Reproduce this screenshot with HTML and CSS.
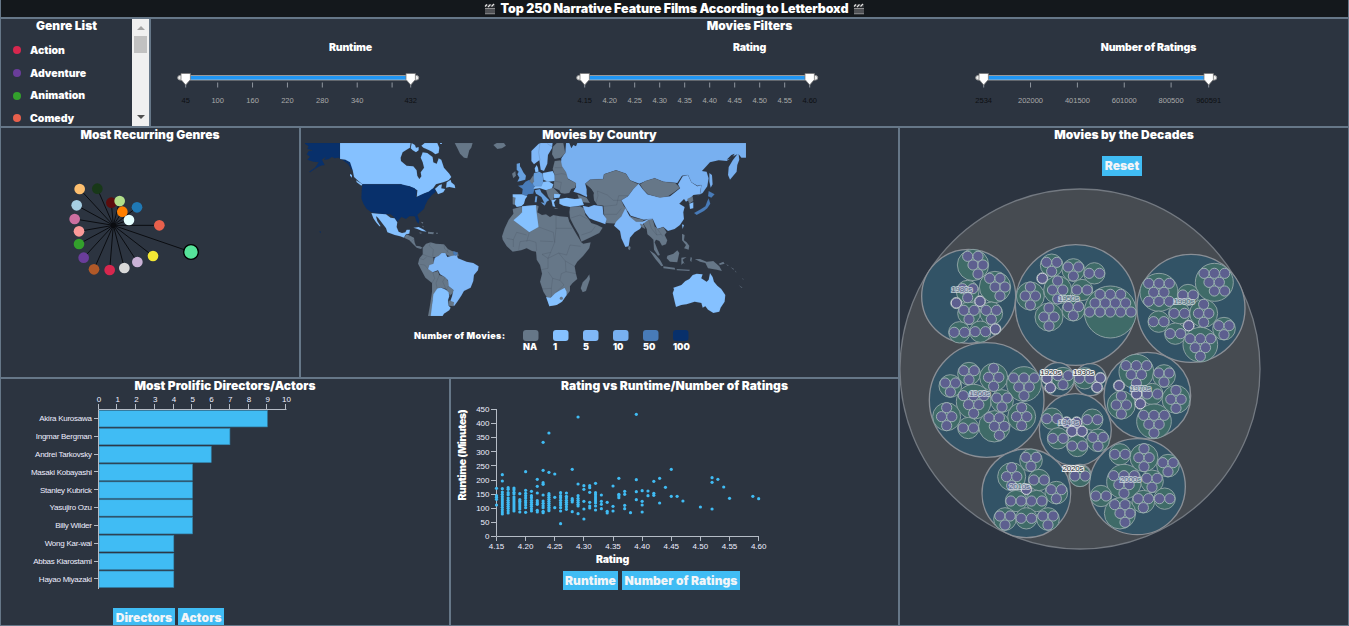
FILE: index.html
```html
<!DOCTYPE html>
<html lang="en">
<head>
<meta charset="utf-8">
<title>Top 250 Narrative Feature Films</title>
<link rel="stylesheet" href="styles.css">
</head>
<body>
<div class="dashboard">
  <header class="topbar">
    <svg class="clap" viewBox="0 0 12 12"><path d="M1 1H11V4.500H1Z" fill="#303236"/><path d="M1 3.500l2-2M4 4l2.500-2.500M7.500 3.500l2.500-2.500" stroke="#e4e4e4" stroke-width="1.200" fill="none"/><path d="M1 5H11V11H1Z" fill="#505256"/><path d="M1 5.500H11M1 10.800H11" stroke="#aaa" stroke-width=".7"/></svg>
    <h1 class="page-title">Top 250 Narrative Feature Films According to Letterboxd</h1>
    <svg class="clap" viewBox="0 0 12 12"><path d="M1 1H11V4.500H1Z" fill="#303236"/><path d="M1 3.500l2-2M4 4l2.500-2.500M7.500 3.500l2.500-2.500" stroke="#e4e4e4" stroke-width="1.200" fill="none"/><path d="M1 5H11V11H1Z" fill="#505256"/><path d="M1 5.500H11M1 10.800H11" stroke="#aaa" stroke-width=".7"/></svg>
  </header>

  <section class="panel genres">
    <div class="genre-scroll">
      <h2 class="title">Genre List</h2>
      <ul class="genre-list">
        <li><i class="dot action"></i>Action</li>
        <li><i class="dot adventure"></i>Adventure</li>
        <li><i class="dot animation"></i>Animation</li>
        <li><i class="dot comedy"></i>Comedy</li>
      </ul>
    </div>
    <div class="scrollbar"><i class="arrow up"></i><i class="thumb"></i><i class="arrow down"></i></div>
  </section>

  <section class="panel filters">
    <h2 class="title">Movies Filters</h2>
    <div class="filter-row">
      <div class="filter"><h3 class="subtitle">Runtime</h3><svg class="slider" id="s-runtime"></svg></div>
      <div class="filter"><h3 class="subtitle">Rating</h3><svg class="slider" id="s-rating"></svg></div>
      <div class="filter"><h3 class="subtitle">Number of Ratings</h3><svg class="slider" id="s-count"></svg></div>
    </div>
  </section>

  <section class="panel network">
    <h2 class="title">Most Recurring Genres</h2>
    <svg class="chart" id="network" width="298" height="233" viewBox="1 143 298 233"></svg>
  </section>

  <section class="panel map">
    <h2 class="title">Movies by Country</h2>
    <svg class="chart" id="map" width="597" height="233" viewBox="301 143 597 233">
      <defs><clipPath id="frame"><rect x="305" y="143" width="441" height="173"/></clipPath></defs>
      <g clip-path="url(#frame)">
        <g class="land" transform="translate(300 125) scale(.33333)">
          <path class="c100" d="M12,54H120V102L136,104 150,112 160,128 162,142 152,130 145,118 132,108 116,98 104,100 96,96 85,103 72,105 78,95 66,104 74,120 62,122 48,130 30,142 27,140 45,128 56,112 40,110 22,104 30,95 20,88 26,78 38,76 22,72 26,64ZM59,318l4,2-1,4-3-2Z"/>
          <path class="c1" d="M120,54H332L330,68 320,74 308,82 302,98 303,108 320,122 340,124 350,136 352,152 358,162 364,154 362,142 372,128 368,112 362,98 368,82 382,84 398,96 400,112 410,116 416,100 424,104 432,128 448,146 454,156 446,166 430,172 408,178 398,192 402,194 418,180 426,178 424,190 436,192 430,202 414,208 410,200 405,192 388,200 372,206 360,212 350,217 352,196 340,190 328,184 310,182 303,178H187L175,168 162,156 158,136 150,112 136,104 120,102Z"/>
          <path class="c1" d="M364,62L374,54H412L418,68 416,84 406,88 396,80 384,74 370,68ZM335,54L345,60 348,68 356,66 356,76 348,82 338,76 332,70ZM440,172L452,164 454,172 464,180 466,190 448,186 438,188ZM168,166L188,178 184,182 170,172ZM150,146l6,4 0,8-6-6ZM420,54h6v3h-6Z"/>
          <path class="c100" d="M187,178H303L328,184 344,190 350,198 348,217 362,210 376,204 386,200 396,192 403,190 408,200 396,210 384,224 376,240 372,252 358,264 352,270 358,286 356,296 350,290 344,274 328,274 318,282 304,276 292,290 284,278 272,268 258,268 236,266 214,262 200,252 190,236 184,220 185,196Z"/>
          <path class="c1" d="M214,264L236,266 258,268 272,278 284,280 292,292 290,306 296,320 306,324 316,322 320,314 330,314 328,326 318,328 312,338 300,334 284,330 262,322 258,310 246,294 234,278 228,274 232,288 242,304 238,304 228,292 220,280ZM340,308L356,306 372,314 380,320 366,318 352,312Z"/>
          <path class="na" d="M312,338L320,328 330,332 342,338 344,352 348,362 360,364 368,368 362,372 350,368 338,356 328,346ZM384,320L402,322 400,328 384,326ZM358,322l10,2-8,2ZM408,323h6v3h-6ZM362,290l8,2-2,4ZM366,302l5,2-1,4Z"/>
          <path class="na" d="M368,368L378,356 392,352 408,356 432,358 444,372 456,378 474,382 476,392 460,400 430,384 425,396 400,396 402,418 386,430 400,442 414,438 418,450 436,456 446,470 448,486 460,494 458,504 450,512 446,502 438,492 424,488 412,492 404,506 398,526 396,573H384L390,540 396,500 396,474 376,458 364,436 354,416 358,400 368,388Z"/>
          <path class="c5" d="M425,384L436,384 442,396 456,392 470,390 474,400 480,402 500,410 520,414 536,424 534,436 522,450 520,468 512,488 492,498 484,512 472,530 462,544 450,530 456,514 460,496 446,484 444,466 434,456 420,448 414,436 398,442 384,432 388,420 400,416 404,398 416,392Z"/>
          <path class="c50" d="M460,378L474,384 468,392 460,388Z"/>
          <path class="na" d="M446,526L462,532 460,544 446,542ZM444,484L448,486 460,494 458,504 450,510 440,498Z"/>
          <path class="c1" d="M412,490L424,488 438,494 446,502 448,514 444,526 446,542 452,548 448,556 432,566 428,573H392L396,540 400,508Z"/>
          <path class="na" d="M464,54H518L514,68 508,76 502,100 492,98 480,86 472,70ZM580,60L590,54H612L618,62 606,70 592,72ZM636,146L646,138 648,152 640,160ZM638,216L646,216 644,240 638,238Z"/>
          <path class="c20" d="M650,116L660,114 660,124 664,130 670,142 678,152 676,164 662,168 652,170 658,158 652,148 656,140 650,134Z"/>
          <path class="c50" d="M654,182L668,180 676,170 688,164 702,178 704,188 700,206 684,208 680,214 666,208 668,192Z"/>
          <path class="c1" d="M638,208L666,208 682,214 676,222 672,236 664,244 650,246 644,238 646,218 638,216Z"/>
          <path class="line" d="M392,352l-4,10 12,12-2,20M432,358l2,14 14,12M444,372l-4,14M368,388l16,6 16,4M358,400l12,4 10,-8M384,432l-10-12-14-2M398,442l6,18-8,14M418,450l-10,24 4,18M436,456l-8,14 10,22M322,340l8-8M334,350l8-8"/>
        </g>
        <g class="land" transform="translate(520 125) scale(.33333)">
          <path class="c10" d="M138,54H678V98L664,98 656,88 658,104 652,120 650,140 630,164 624,150 626,126 638,106 652,88 640,94 620,108 596,106 570,112 546,138 560,140 566,160 562,184 548,204 530,214 540,208 544,180 532,182 514,172 504,150 486,152 472,174 430,170 404,160 378,168 358,176 330,166 318,146 288,136 252,148 250,162 210,164 196,176 204,210 200,216 180,206 160,200 168,186 166,174 142,160 136,142 122,122 124,100 136,82ZM568,144L576,150 578,178 572,188 568,170Z"/>
          <path class="sea" d="M148,54H172L168,64 160,60 154,70ZM620,104l14-14 10-4-8,14Z"/>
          <path class="na" d="M-22,252L0,246 20,242 48,240 56,244 52,262 66,270 78,268 90,276 100,270 120,274 144,276 148,290 166,322 184,352 190,356 212,352 208,370 190,392 172,410 164,424 168,446 172,462 158,474 150,484 150,498 136,516 126,530 110,540 88,544 82,520 70,500 60,470 66,446 60,420 50,404 48,380 36,378 20,370 4,376-22,380-40,364-52,344-54,334-46,310-34,284-20,266ZM208,448L210,462 198,498 188,502 182,490 188,472 200,460Z"/>
          <path class="c1" d="M-20,286L-2,270 6,262 6,244 48,240 50,262 56,306 28,322Z"/>
          <path class="c1" d="M78,516L92,518 106,504 120,496 134,488 140,500 140,510 126,530 110,540 88,544Z"/>
          <circle class="na" cx="124" cy="520" r="4.500"/>
          <path class="na" d="M150,246L180,244 192,250 196,270 206,282 214,294 232,300 248,308 238,324 214,336 184,350 176,328 162,304 150,280 148,262Z"/>
          <path class="na" d="M196,176L210,164 250,162 252,148 288,136 318,146 330,166 356,178 340,192 324,214 304,226 312,244 326,256 304,274 290,296 258,294 252,268 250,242 232,240 222,226 220,206 212,190ZM172,208L200,218 210,234 188,232 176,220Z"/>
          <path class="c1" d="M118,222L140,218 164,222 184,220 192,240 170,244 150,246 130,242 118,236Z"/>
          <path class="c5" d="M188,242L206,246 222,240 248,244 250,268 260,282 256,298 240,292 222,286 208,280 196,264Z"/>
          <path class="c5" d="M304,226L324,214 340,192 356,176 368,192 382,208 416,216 450,214 480,190 474,178 488,154 504,150 514,172 532,184 544,180 540,208 520,210 510,222 498,230 492,222 478,236 494,246 490,262 492,282 480,300 464,312 444,318 430,306 412,312 398,282 370,284 332,272 318,250Z"/>
          <path class="c5" d="M316,250L328,272 352,288 372,288 386,282 398,280 386,306 372,294 360,312 344,322 330,338 326,364 316,366 304,340 300,318 282,302 288,290 304,274Z"/>
          <path class="na" d="M328,274L350,280 370,284 370,290 348,290ZM360,296l12,4 4,12-12-6ZM360,178L376,168 404,160 430,170 466,174 480,188 462,202 444,214 420,218 384,208 370,194Z"/>
          <path class="c5" d="M34,78L56,56 62,54H98L96,70 84,90 82,116 72,138 62,134 58,106 42,118 34,108Z"/>
          <path class="na" d="M98,66L110,54H130L136,84 122,98 104,102 96,88ZM104,108L122,106 126,124 138,142 144,162 168,174 166,188 154,192 148,204 134,206 122,204 118,196 100,188 104,150 98,132Z"/>
          <path class="c1" d="M44,130L50,120 54,128 56,140 46,142ZM68,144L98,138 104,150 104,168 84,170 70,164ZM44,184L64,172 84,168 100,178 96,192 78,196 60,190 40,192Z"/>
          <path class="c20" d="M42,144L58,140 68,146 70,170 64,184 42,184 36,170ZM44,196L60,192 64,202 78,216 88,226 80,230 76,240 64,216 48,206ZM62,232l14,2-2,8ZM46,214l6,0-2,18-6,0Z"/>
          <path class="na" d="M78,196L100,188 118,206 114,212 102,216 98,230 92,226 84,214ZM28,168L40,150 42,170 36,176ZM104,248l12,2-12,2Z"/>
          <path class="c1" d="M102,206L122,208 118,218 102,220ZM94,226L110,222 102,232 106,246 98,244Z"/>
          <path class="sea" d="M200,196L214,192 222,204 216,216 226,236 212,238 206,222 200,208Z"/>
          <path class="na" d="M370,296L386,284 398,282 404,304 414,312 430,306 440,322 434,330 442,346 438,358 426,362 418,348 408,344 404,352 412,372 420,390 414,392 402,374 400,344 392,336 382,328 380,312ZM388,376L404,386 420,404 430,422 424,424 406,402ZM430,424L464,428 466,434 430,430ZM470,432l40,2-2,4-38-2ZM442,392L460,386 472,376 478,384 472,412 450,410 440,400ZM484,398L500,396 488,404 494,418 490,414 484,420ZM486,326L494,330 492,346 500,352 508,362 506,374 492,370 498,360 486,346ZM512,396l4,2-2,14-4-6ZM524,402L540,402 560,410 580,408 598,424 606,438 590,434 564,430 556,414 540,410ZM326,362l6,4-2,10-6-4ZM502,222L518,214 520,228 508,236ZM596,416l14-6 4,6-14,4ZM618,416l8,6-2,2ZM632,426l10,6-2,2ZM644,436l6,6-3,0ZM656,480l12,8-4,0ZM668,458l3,6-3-1Z"/>
          <path class="c1" d="M508,236L520,232 520,250 510,252ZM486,298l6,2-4,12Z"/>
          <path class="c50" d="M566,198L584,208 574,218 564,214ZM566,220L571,236 562,250 552,258 530,270 522,264 542,253 556,244 562,228Z"/>
          <path class="c1" d="M462,494L460,488 484,480 496,468 508,462 518,450 530,446 548,448 544,460 560,470 566,464 570,444 578,456 582,470 592,482 604,492 616,510 614,530 602,548 598,560 580,564 564,554 556,544 548,548 544,534 524,530 500,538 484,540 468,546 464,530 458,504Z"/>
          <path class="line" d="M56,306L100,322 104,352 92,382 66,388M108,272V310H156M108,310L104,352M28,322L20,350M0,350L28,346 48,352 50,378M60,348L100,350M66,388L84,400 116,384 140,390 150,360 182,364M92,382L84,400 84,430 64,434M116,384L136,408 138,440 124,446 120,466 98,460 84,440M136,408L164,424M138,440L168,446M120,466L132,480 106,504M98,460L94,490 64,492M94,490V516M-40,340L-20,344-20,366M0,350L-4,374M-20,344L-10,322 20,330M150,280L180,270 206,284M184,330L214,320 226,304M226,240L234,212 232,198 262,210 280,226 304,226M250,244L290,240 296,212 324,212M252,268L290,268 304,250M104,128H126M102,150L124,146 138,148M102,168L124,172 120,196M60,54L56,82 60,106M98,66L82,56M386,284L394,310 410,330 424,328M404,304L410,330M412,312L428,334"/>
        </g>
      </g>
      <g id="legend"></g>
    </svg>
  </section>

  <section class="panel decades">
    <h2 class="title">Movies by the Decades</h2>
    <div class="buttons reset"><button class="btn">Reset</button></div>
    <svg class="chart" id="pack" width="448" height="400" viewBox="900 176 448 400"></svg>
  </section>

  <section class="panel people">
    <h2 class="title">Most Prolific Directors/Actors</h2>
    <svg class="chart" id="bars" width="448" height="214" viewBox="1 394 448 214"></svg>
    <div class="buttons people-buttons"><button class="btn">Directors</button><button class="btn">Actors</button></div>
  </section>

  <section class="panel scatter">
    <h2 class="title">Rating vs Runtime/Number of Ratings</h2>
    <svg class="chart" id="scatter" width="447" height="177" viewBox="451 394 447 177"></svg>
    <div class="buttons scatter-buttons"><button class="btn">Runtime</button><button class="btn wide">Number of Ratings</button></div>
  </section>
</div>
<script src="charts.js"></script>
</body>
</html>
```

FILE: styles.css
```css
* { box-sizing: border-box; }
body { margin: 0; overflow: hidden; background: #2c3440; color: #fff; font-family: Inter, "Liberation Sans", sans-serif; }
.dashboard {
  display: grid;
  width: 1349px;
  height: 626px;
  grid-template-columns: 150px 150px 150px 449px 450px;
  grid-template-rows: 18px 109px 251px 248px;
}
.topbar {
  grid-column: 1 / -1;
  display: flex;
  align-items: center;
  justify-content: center;
  gap: 5px;
  background: #14181c;
  border: 1px solid #678;
  border-top: 0;
}
.clap { width: 12px; height: 12px; }
.page-title { margin: 0; font-size: 12.5px; line-height: 16px; font-weight: 900; letter-spacing: -.1px; white-space: nowrap; }
.panel { border: 1px solid #678; overflow: hidden; min-width: 0; min-height: 0; }
.title { margin: 0; height: 15px; font-size: 12px; line-height: 14px; font-weight: 900; text-align: center; white-space: nowrap; letter-spacing: .03px; }
.chart { display: block; }

.genres { grid-column: 1; display: flex; }
.genre-scroll { flex: 1; overflow: hidden; }
.genre-list { list-style: none; margin: 5px 0 0; padding: 0 0 0 12px; font-size: 10.5px; font-weight: 900; }
.genre-list li { display: flex; align-items: center; height: 22.700px; }
.dot { width: 8px; height: 8px; border-radius: 50%; margin-right: 9px; }
.action { background: #d7274e; }
.adventure { background: #6a3d9a; }
.animation { background: #33a02c; }
.comedy { background: #e8604c; }
.scrollbar { width: 17px; background: #f0f0f0; display: flex; flex-direction: column; align-items: center; padding: 7px 0; }
.arrow { border: 4px solid transparent; border-top-width: 0; border-bottom: 4px solid #a3a3a3; }
.arrow.down { border-bottom-width: 0; border-top: 4px solid #505050; border-left-color: transparent; margin-top: auto; }
.thumb { width: 13px; height: 17px; margin-top: 6px; background: #c1c1c1; }

.filters { grid-column: 2 / -1; }
.filter-row { display: grid; grid-template-columns: repeat(3, 399px); }
.subtitle { margin: 7px 0 0; height: 13px; font-size: 10.5px; line-height: 13px; font-weight: 900; text-align: center; letter-spacing: -.15px; }
.slider { display: block; width: 399px; height: 70px; }
.slider text { font-size: 7.5px; fill: #aaa; text-anchor: middle; font-family: "Liberation Sans", Arial, sans-serif; }
.slider .value { fill: #0c0f12; }
.rail { fill: #eee; stroke: #999; }
.range { fill: #2196f3; }
.handle { fill: #fff; stroke: #777; stroke-width: .8; }
.tick { stroke: #aab0b8; stroke-width: .8; }

.network { grid-column: 1 / 3; }
.spoke { stroke: #0a0c10; }
.map { grid-column: 3 / 5; }
.land path, .land circle { stroke: #2c3440; stroke-opacity: .25; stroke-width: 1; }
.na { fill: #678; }
.c1 { fill: #85c1ff; }
.c5 { fill: #80b8f8; }
.c10 { fill: #78b0f0; }
.c20 { fill: #67a0df; }
.c50 { fill: #487bb8; }
.c100 { fill: #08306b; }
.land .sea { fill: #2c3440; stroke: none; }
.land .line { fill: none; stroke-opacity: .3; stroke-width: 1.5; }
.legend-text { fill: #fff; font-size: 9px; font-weight: 900; }

.decades { grid-column: 5; grid-row: 3 / 5; }
.people { grid-column: 1 / 4; grid-row: 4; }
.scatter { grid-column: 4; grid-row: 4; }
.buttons { display: flex; }
.btn { border: 0; margin: 0; padding: 0; width: 46px; height: 20px; background: #40bcf4; color: #f2f5f8; font: 900 12px/20px Inter, sans-serif; white-space: nowrap; letter-spacing: .05px; }
.reset { padding: 13px 0 0 202px; }
.reset .btn { width: 40px; }
.people-buttons { gap: 3px; padding-left: 112px; }
.people-buttons .btn:first-child { width: 62px; }
.scatter-buttons { gap: 4px; padding-left: 112px; }
.scatter-buttons .btn { width: 55px; height: 19px; line-height: 18px; }
.scatter-buttons .wide { width: 118px; }

.root { fill: #464b51; stroke: #737981; stroke-width: 1.300; }
.decade { fill: #325366; stroke: #8a8f96; stroke-width: 4; }
.genre { fill: #3f6b68; stroke: #8ca0a3; stroke-width: 3; }
.film { fill: #605f92; fill-opacity: .93; stroke: #9bb0b2; stroke-width: 3; }
.film.single { stroke: #cdd2d9; }
.decade-label { font: 8px "Liberation Sans", Arial, sans-serif; letter-spacing: -.2px; fill: #4d6680; text-anchor: middle; stroke: #dde4ea; stroke-width: 2px; paint-order: stroke; opacity: .72; }
.decade-label.front { fill: #20262e; stroke: #f4f4f4; opacity: .95; }
.axis { fill: none; stroke: #b5bcc6; }
.axis-text { font: 8px "Liberation Sans", Arial, sans-serif; fill: #eef; }
.name { letter-spacing: -.26px; }
.end { text-anchor: end; }
.mid { text-anchor: middle; }
.bar { fill: #40bcf4; stroke: #3487b0; stroke-width: .6; }
.point { fill: #40bcf4; }
.axis-title { font-size: 10.5px; font-weight: 900; fill: #fff; text-anchor: middle; letter-spacing: -.15px; }
```

FILE: charts.js
```js
const NS = "http://www.w3.org/2000/svg";
function add(parent, tag, attrs, text) {
  const el = document.createElementNS(NS, tag);
  for (const k in attrs) el.setAttribute(k, attrs[k]);
  if (text !== undefined) el.textContent = text;
  parent.appendChild(el);
  return el;
}
const byId = id => document.getElementById(id);

/* range sliders */
function slider(id, min, max, ticks, format) {
  const svg = byId(id), left = 34.7, width = 225;
  const x = v => left + (v - min) / (max - min) * width;
  add(svg, "rect", { class: "rail", x: left - 8, y: 21.500, width: width + 16, height: 4.500, rx: 2.2 });
  add(svg, "rect", { class: "range", x: left, y: 22, width: width, height: 3.600 });
  [min, ...ticks, max].forEach(v => add(svg, "path", { class: "tick", d: `M${x(v)} 28.500v5` }));
  ticks.forEach(v => { if (v !== 400) add(svg, "text", { x: x(v), y: 48.800 }, format(v)); });
  [min, max].forEach(v => {
    add(svg, "text", { class: "value", x: x(v), y: 48.800 }, format(v));
    add(svg, "path", { class: "handle", d: `M${x(v) - 4.700} 19.500h9.400v6l-4.700 5.500-4.700-5.500z` });
  });
}
slider("s-runtime", 45, 432, [100, 160, 220, 280, 340, 400], String);
slider("s-rating", 4.15, 4.6, [4.2, 4.25, 4.3, 4.35, 4.4, 4.45, 4.5, 4.55], v => v.toFixed(2));
slider("s-count", 2534, 960591, [202000, 401500, 601000, 800500], String);

/* genre network */
const net = add(byId("network"), "g", { transform: "translate(40 125) scale(.33333)" });
const nodes = [[119,192,"#fdbf6f"],[172,191,"#183818"],[110,241,"#a6cee3"],[104,282,"#cc6fa0"],[117,319,"#fb9a99"],
  [117,357,"#33a02c"],[131,398,"#6a3d9a"],[162,433,"#b15928"],[209,435,"#d7274e"],[253,429,"#d9d9d9"],[292,411,"#cab2d6"],
  [339,393,"#f4e834"],[358,301,"#e8604c"],[214,233,"#5c0d0d"],[239,228,"#b2df8a"],[291,247,"#1f78b4"],[247,260,"#ff7f00"],[267,285,"#e5ffff"]];
nodes.concat([[453,381]]).forEach(n => add(net, "path", { class: "spoke", "stroke-width": 3, d: `M220 301L${n[0]} ${n[1]}` }));
add(net, "circle", { cx: 220, cy: 301, r: 8, fill: "#0a0c10" });
nodes.forEach(n => add(net, "circle", { cx: n[0], cy: n[1], r: 16, fill: n[2] }));
add(net, "circle", { cx: 453, cy: 381, r: 22, fill: "#56e39a", stroke: "#000", "stroke-width": 4 });

/* map legend */
const legend = byId("legend");
add(legend, "text", { class: "legend-text", x: 414, y: 339, textLength: 91 }, "Number of Movies:");
[["NA","na"],["1","c1"],["5","c5"],["10","c10"],["50","c50"],["100","c100"]].forEach(([t, c], i) => {
  add(legend, "rect", { class: c, x: 523 + i * 30, y: 330, width: 15.500, height: 11, rx: 3 });
  add(legend, "text", { class: "legend-text", x: 523 + i * 30, y: 350 }, t);
});

/* circle packing: decade > genre > film */
const pack = byId("pack");
add(pack, "circle", { class: "root", cx: 1080, cy: 369, r: 180 });
const pk = add(pack, "g", { transform: "translate(895 230) scale(.33333)" });
const offsets = {
  1: [[0,0]], 2: [[-15.5,0],[15.5,0]], 3: [[-15.5,-9],[15.5,-9],[0,18]], 4: [[0,-27],[-15.5,0],[15.5,0],[0,27]],
  5: [[-16,-26],[15,-26],[0,0],[30,0],[15,27]],
  6: [[-31,-18],[0,-18],[31,-18],[-15.5,9],[15.5,9],[0,35]],
  7: [[-31,-27],[0,-27],[31,-27],[-16,0],[15,0],[0,26],[31,26]],
  8: [[-31,-27],[0,-27],[31,-27],[-16,0],[15,0],[-31,27],[0,27],[31,27]],
  12: [[-31,-53],[0,-53],[31,-53],[-46,-27],[-15,-27],[15,-27],[46,-27],[-62,0],[-31,0],[0,0],[31,0],[62,0]]
};
const radius = { 1: 17, 2: 32, 3: 34, 4: 42, 5: 47, 6: 52, 7: 57, 8: 57, 12: 78 };
const decades = [
  ["1980s",221,199,141,[[5,234,105],[5,300,171],[3,218,185],[1,184,219],[1,255,214],[3,222,250],[3,289,250],[2,193,307],[2,256,305],[1,301,297]]],
  ["1950s",542,225,181,[[3,470,106],[3,535,120],[1,442,145],[4,406,198],[4,488,180],[3,535,239],[4,462,261],[2,561,180],[2,598,130],[12,646,246]]],
  ["1990s",888,235,162,[[8,792,187],[7,958,157],[2,879,195],[2,853,250],[4,926,250],[2,791,275],[1,881,287],[2,841,311],[3,987,296],[6,916,344]]],
  ["1960s",275,510,172,[[3,222,431],[4,296,442],[3,166,468],[6,387,462],[6,236,515],[4,155,560],[3,321,513],[2,220,594],[5,298,589],[4,380,560]]],
  ["1920s",488,448,50,[[1,456,445],[1,466,473],[3,504,446]]],
  ["1930s",586,449,48,[[2,569,445],[1,616,444],[1,606,472]]],
  ["1970s",757,497,130,[[6,724,425],[3,807,438],[1,672,467],[4,679,525],[2,772,492],[1,725,492],[1,736,521],[4,843,508],[6,777,574]]],
  ["1940s",541,599,108,[[2,471,566],[1,515,577],[1,545,577],[1,531,604],[1,561,604],[2,489,625],[2,547,648],[2,592,569],[3,609,631]]],
  ["2010s",394,790,133,[[3,408,691],[4,350,740],[2,432,750],[1,394,778],[3,484,788],[2,363,813],[2,425,813],[3,330,867],[2,394,865],[3,459,867]]],
  ["2020s",555,736,33,[[2,555,738]]],
  ["2000s",727,770,144,[[2,675,673],[4,747,683],[3,819,707],[6,687,755],[3,771,754],[2,618,798],[3,745,815],[2,809,806],[5,675,850]]]
];
const front = ["1920s", "1930s", "2020s"];
decades.forEach(d => add(pk, "circle", { class: "decade", cx: d[1], cy: d[2], r: d[3] }));
decades.forEach(d => d[4].forEach(g => add(pk, "circle", { class: "genre", cx: g[1], cy: g[2], r: radius[g[0]] })));
decades.forEach(d => d[4].forEach(g => offsets[g[0]].forEach(o =>
  add(pk, "circle", { class: g[0] === 1 ? "film single" : "film", cx: g[1] + o[0], cy: g[2] + o[1], r: 15.300 }))));
decades.forEach(d => add(pack, "text", {
  class: front.includes(d[0]) ? "decade-label front" : "decade-label",
  x: 895 + (d[1] - 21) / 3, y: 232.700 + (d[2] - 21) / 3
}, d[0]));

/* bar chart */
const bars = byId("bars");
const people = [["Akira Kurosawa",9],["Ingmar Bergman",7],["Andrei Tarkovsky",6],["Masaki Kobayashi",5],["Stanley Kubrick",5],
  ["Yasujiro Ozu",5],["Billy Wilder",5],["Wong Kar-wai",4],["Abbas Kiarostami",4],["Hayao Miyazaki",4]];
people.forEach(([name, n], i) => {
  const y = 410.600 + i * 17.830;
  add(bars, "rect", { class: "bar", x: 99, y: y, width: n * 18.700, height: 16.300 });
  add(bars, "path", { class: "axis", d: `M94 ${Math.round(y + 7.300) + .5}h5` });
  add(bars, "text", { class: "axis-text name end", x: 91.700, y: y + 10.600 }, name);
});
add(bars, "path", { class: "axis", d: "M98.500 589V409.500H286.500" });
for (let i = 0; i <= 10; i++) {
  add(bars, "path", { class: "axis", d: `M${Math.floor(99 + i * 18.750) - .5} 404v5` });
  add(bars, "text", { class: "axis-text mid", x: 99 + i * 18.750, y: 402 }, i);
}

/* scatter plot */
const sc = byId("scatter");
add(sc, "path", { class: "axis", d: "M496.500 409V536.500H759" });
for (let i = 0; i <= 9; i++) {
  const y = 536.500 - i * 14.110, x = 496.500 + i * 29.130;
  add(sc, "path", { class: "axis", d: `M491 ${Math.floor(y) + .5}h5M${Math.floor(x) + .5} 537v4` });
  add(sc, "text", { class: "axis-text end", x: 489.500, y: y + 2.700 }, i * 50);
  add(sc, "text", { class: "axis-text mid", x: x, y: 549 }, (4.15 + i * .05).toFixed(2));
}
add(sc, "text", { class: "axis-title", x: 612.500, y: 563 }, "Rating");
add(sc, "text", { class: "axis-title", transform: "translate(466 455) rotate(-90)", textLength: 91 }, "Runtime (Minutes)");
const columns = {
  0:[340,362,367,373,390],1:[299,318,341,351,358,365,372,378,384,390,397,404,411,417],
  2:[338,343,353,359,369,376,382,388,394,400,407,414],3:[339,344,352,357,366,372,378,384,390,396,402,408],
  4:[356,374,379,384,390,396,402,411],5:[290,346,355,362,369,377,383,390,398,412],6:[349,362,368,376,382,388,394,401,408],
  7:[313,334,354,377,383,388,406,411],8:[202,286,323,328,360,378,385,392,398,409,413],
  9:[174,292,356,361,367,373,379,385,391,397,402,407],10:[297,367,398],11:[446,353,362,368,376,383,390,398,408],
  12:[354,364,369,376,382,388,395,403],13:[283,371,376,381,410],14:[126,327,362,370,376,382,388,393,416],
  15:[332,343,379,402,432],16:[332,338,352,382,393,399],17:[325,353,359,366,372,378,384,393,405],18:[360,379,388,401],
  19:[382,409,414],20:[333,394,408],21:[310,358,362,368],22:[349,358,391,401],23:[413],24:[118,314,350,374],
  25:[347,379,390,411],26:[348,362],27:[319,355,361],28:[310,384],29:[337],30:[283,364],31:[364],32:[378],
  35:[396],37:[308,322,402],38:[313],39:[336],40:[370],44:[364],45:[371]
};
for (const c in columns) columns[c].forEach(v =>
  add(sc, "circle", { class: "point", cx: 496.500 + c * 5.826, cy: 375 + v / 3, r: 1.600 }));
```
